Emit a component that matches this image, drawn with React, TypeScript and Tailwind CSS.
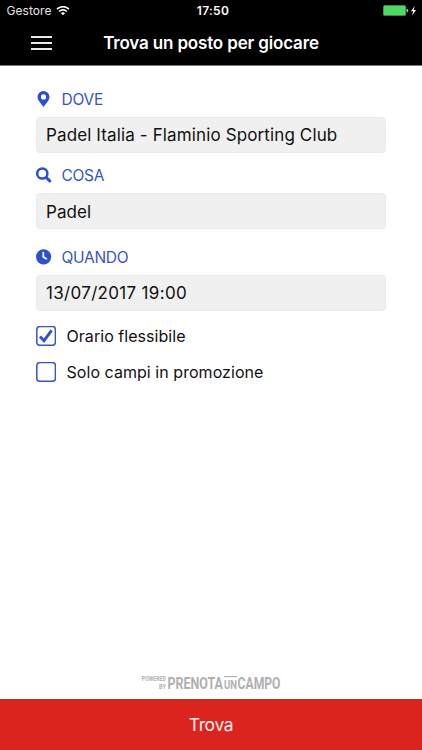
import React from 'react';

const MapPin = () => (
  <svg className="h-4 w-[14px]" viewBox="0 0 14 16" fill="#2f50cc">
    <path fillRule="evenodd" d="M6.500 0a6 6 0 0 0-6 6c0 1.600.8 3 1.600 4.200L6.500 16l4.400-5.800c.8-1.200 1.600-2.600 1.600-4.200a6 6 0 0 0-6-6Zm0 3.300a2.600 2.600 0 1 1 0 5.200 2.600 2.600 0 0 1 0-5.200Z" />
  </svg>
);

const Magnifier = () => (
  <svg className="h-4 w-4" viewBox="0 0 16 16" fill="none" stroke="#2f50cc">
    <circle cx="6.300" cy="6.500" r="5.100" strokeWidth="2.500" />
    <path d="M10.300 10.500 13.700 13.900" strokeWidth="3" strokeLinecap="round" />
  </svg>
);

const Clock = () => (
  <svg className="h-4 w-4" viewBox="0 0 16 16">
    <circle cx="7.600" cy="7.800" r="7.600" fill="#2f50cc" />
    <path d="M7.300 3.500v4.400l3 1.800" fill="none" stroke="#fff" strokeWidth="1.700" strokeLinecap="round" strokeLinejoin="round" />
  </svg>
);

type FieldProps = {
  icon: React.ReactNode;
  label: string;
  value: string;
  labelClass: string;
  valueClass: string;
};

const Field = ({ icon, label, value, labelClass, valueClass }: FieldProps) => (
  <div>
    <div className="flex h-5 items-center">
      <span className="flex w-4 justify-center">{icon}</span>
      <span className={`ml-[9.500px] whitespace-nowrap text-[15.500px] leading-5 text-[#3654c8] ${labelClass}`}>{label}</span>
    </div>
    <div className="mt-2 flex h-9 items-center rounded-[4px] border border-[#eaeaea] bg-[#f0f0f0] pl-[9px]">
      <span className={`whitespace-nowrap text-[17px] leading-6 text-[#111] ${valueClass}`}>{value}</span>
    </div>
  </div>
);

type OptionProps = { checked?: boolean; label: string };

const Option = ({ checked, label }: OptionProps) => (
  <div className="flex h-5 items-center">
    <span className="flex size-5 items-center justify-center">
      <svg className="size-5" viewBox="0 0 20 20" fill="none">
        <rect x="0.800" y="0.500" width="18.600" height="18.800" rx="3" stroke="#3654c8" strokeWidth="1.500" />
        {checked && <path d="M4 10.500 8 14.700 15.600 4.300" stroke="#2f50cc" strokeWidth="2.800" />}
      </svg>
    </span>
    <span className="ml-[10.500px] whitespace-nowrap text-[16px] leading-5 tracking-[0.050px] text-[#111]">{label}</span>
  </div>
);

export default function App() {
  return (
    <div className="flex h-[750px] w-[422px] flex-col overflow-hidden bg-white font-['Inter',sans-serif]">
      <header className="h-[66px] shrink-0 border-b border-[#777] bg-black text-white">
        <div className="grid h-[22px] grid-cols-3 items-center">
          <div className="flex items-center pl-[6.500px]">
            <span className="text-[12px] leading-4 tracking-[0.050px] text-[#e4e4e4]">Gestore</span>
            <svg className="ml-[5px] h-[10px] w-[14px]" viewBox="0 0 14 10" fill="none" stroke="#fff" strokeWidth="1.700">
              <path d="M1 3.200a8.500 8.500 0 0 1 12 0M3.200 5.500a5.400 5.400 0 0 1 7.600 0" />
              <path d="M7 9.300 4.900 7.200a3 3 0 0 1 4.200 0Z" fill="#fff" stroke="none" />
            </svg>
          </div>
          <span className="pl-[4px] text-center text-[12px] font-semibold leading-4 tracking-[0.300px]">17:50</span>
          <div className="flex items-center justify-end pr-[4px]">
            <svg className="h-3 w-[35px]" viewBox="0 0 35 12">
              <rect x="0.300" y="0.500" width="22.500" height="10" rx="1.500" fill="#4cd964" stroke="#5b8e63" strokeWidth="0.600" />
              <path d="M23.700 3.800q1.500.2 1.500 1.800t-1.500 1.800Z" fill="#b9d8bd" />
              <path d="m31.700.9-3.700 5.400h2.200L29 10.500l4-5.600h-2.300Z" fill="#fff" />
            </svg>
          </div>
        </div>
        <div className="grid h-[42px] grid-cols-[72px_1fr_72px] items-center">
          <div className="ml-[31px] flex w-[20.500px] flex-col gap-[4px]">
            <i className="h-[2px] bg-[#e8e8e8]" />
            <i className="h-[2px] bg-[#e8e8e8]" />
            <i className="h-[2px] bg-[#e8e8e8]" />
          </div>
          <h1 className="whitespace-nowrap text-center text-[17px] font-semibold leading-6 tracking-[-0.160px]">Trova un posto per giocare</h1>
        </div>
      </header>

      <main className="flex flex-1 flex-col px-9 pt-[23px]">
        <Field icon={<MapPin />} label="DOVE" value="Padel Italia - Flaminio Sporting Club" labelClass="pt-px tracking-[-0.200px]" valueClass="tracking-[0.125px]" />
        <div className="mt-3">
          <Field icon={<Magnifier />} label="COSA" value="Padel" labelClass="pt-px tracking-[-0.300px]" valueClass="pt-px tracking-[0.050px]" />
        </div>
        <div className="mt-[18px]">
          <Field icon={<Clock />} label="QUANDO" value="13/07/2017 19:00" labelClass="pt-px tracking-[-0.300px]" valueClass="tracking-[0.320px]" />
        </div>
        <div className="mt-[15px] flex flex-col gap-[15.500px]">
          <Option checked label="Orario flessibile" />
          <Option label="Solo campi in promozione" />
        </div>
        <div className="mt-auto flex justify-center pb-[4px]">
          <svg className="h-[24px] w-[148px]" viewBox="-4 -2 148 24" fill="#b0b0b0" fontFamily="'Roboto', sans-serif" fontWeight="700">
            <text x="0.800" y="7.500" fontSize="6.500" textLength="24" lengthAdjust="spacingAndGlyphs">POWERED</text>
            <text x="18" y="15.500" fontSize="6.500" textLength="6.800" lengthAdjust="spacingAndGlyphs">BY</text>
            <text x="26.500" y="15.500" fontSize="17" textLength="55.500" lengthAdjust="spacingAndGlyphs">PRENOTA</text>
            <path d="M83 3h13v1.200H83Z" />
            <text x="83" y="15.500" fontSize="13" textLength="13" lengthAdjust="spacingAndGlyphs">UN</text>
            <text x="96.500" y="15.500" fontSize="17" textLength="43" lengthAdjust="spacingAndGlyphs">CAMPO</text>
          </svg>
        </div>
      </main>

      <button className="h-[51px] shrink-0 bg-[#dc241f] text-[17.500px] leading-[51px] tracking-[-0.350px] text-[#fdeeee]">Trova</button>
    </div>
  );
}
